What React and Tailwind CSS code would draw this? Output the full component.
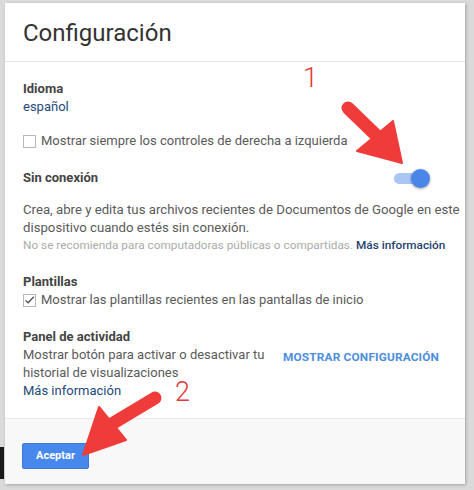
import React from 'react'

const font = { fontFamily: 'Roboto, "Open Sans", Arial, sans-serif' }

function Toggle() {
  return (
    <div className="relative w-[36px] h-[20px] mr-[23px] flex items-center">
      <div className="w-[30px] h-[11px] rounded-full bg-[#a9c6f5]" />
      <div className="absolute right-0 top-[1px] w-[19px] h-[19px] rounded-full bg-[#4a86e8] shadow-[0_1px_3px_rgba(0,0,0,0.35)]" />
    </div>
  )
}

function Checkbox({ checked }) {
  return (
    <span className="w-[13px] h-[13px] border border-[#b8b8b8] bg-white flex items-center justify-center shrink-0">
      {checked && (
        <svg viewBox="0 0 14 14" className="w-[14px] h-[14px] -mt-[1px]">
          <path d="M2 7.5 L5.3 10.6 L12.5 2.8" fill="none" stroke="#555" strokeWidth="1.8" />
        </svg>
      )}
    </span>
  )
}

function Annotations() {
  return (
    <svg className="absolute inset-0 pointer-events-none" width="474" height="490" viewBox="0 0 474 490">
      <g fill="#f03b3b" stroke="#f03b3b">
        <line x1="348" y1="108" x2="380" y2="139" strokeWidth="13" strokeLinecap="round" />
        <polygon points="357,151 393,121 402,163" strokeWidth="2" strokeLinejoin="round" />
        <line x1="155" y1="398" x2="110" y2="425" strokeWidth="13" strokeLinecap="round" />
        <polygon points="99,407 126,440 83,455" strokeWidth="2" strokeLinejoin="round" />
      </g>
      <text x="303" y="87" fontFamily="Roboto, sans-serif" fontWeight="300" fontSize="27" fill="#e23a3a">1</text>
      <text x="175" y="401" fontFamily="Roboto, sans-serif" fontWeight="300" fontSize="27" fill="#e23a3a">2</text>
    </svg>
  )
}

export default function App() {
  return (
    <div className="relative w-[474px] h-[490px] bg-[#dadada] flex overflow-hidden" style={font}>
      {/* left gutter */}
      <div className="w-[5px] flex flex-col">
        <div className="h-[447px]" />
        <div className="h-[32px] w-[4px] bg-[#1a1a1a]" />
      </div>

      <div className="mt-[3px] w-[460px] h-[481px] bg-white flex flex-col shadow-[1px_1px_3px_rgba(0,0,0,0.25)]">
        {/* header */}
        <div className="h-[59px] border-b border-[#e4e4e4] px-[18px] flex items-center">
          <h1 className="text-[24px] text-[#333] leading-none pt-[2px]">Configuración</h1>
        </div>

        {/* body */}
        <div className="flex-1 pl-[18px] pr-[12px] pt-[18px] text-[13px] text-[#5a5a5a]">
          <div className="font-bold text-[#444] leading-[18px]">Idioma</div>
          <div className="leading-[18px] text-[#22497a]">español</div>

          <label className="mt-[16px] flex items-center gap-[5px] leading-[18px]">
            <Checkbox />
            <span>Mostrar siempre los controles de derecha a izquierda</span>
          </label>

          <div className="mt-[19px] flex items-center justify-between h-[18px]">
            <span className="font-bold text-[#444]">Sin conexión</span>
            <Toggle />
          </div>

          <p className="mt-[14px] leading-[18px] whitespace-nowrap text-[13.2px]">
            Crea, abre y edita tus archivos recientes de Documentos de Google en este
            <br />
            dispositivo cuando estés sin conexión.
          </p>
          <p className="leading-[16px] text-[11.8px] text-[#ababab] whitespace-nowrap">
            No se recomienda para computadoras públicas o compartidas.{' '}
            <span className="text-[#1f3f70] font-medium">Más información</span>
          </p>

          <div className="mt-[20px] font-bold text-[#444] leading-[18px]">Plantillas</div>
          <label className="flex items-center gap-[5px] leading-[18px]">
            <Checkbox checked />
            <span>Mostrar las plantillas recientes en las pantallas de inicio</span>
          </label>

          <div className="mt-[19px] font-bold text-[#444] leading-[18px]">Panel de actividad</div>
          <div className="flex">
            <div className="w-[260px] leading-[18px]">
              <div>Mostrar botón para activar o desactivar tu historial de visualizaciones</div>
              <div className="text-[#22497a]">Más información</div>
            </div>
            <button className="h-[18px] pt-[2px] text-[11.8px] font-bold text-[#4d8ede] tracking-[0.2px] leading-[18px]">
              MOSTRAR CONFIGURACIÓN
            </button>
          </div>
        </div>

        {/* footer */}
        <div className="h-[66px] border-t border-[#e8e8e8] bg-[#f8f8f8] px-[17px] pt-[23px]">
          <button className="w-[67px] h-[26px] rounded-[2px] bg-[#4688ec] border border-[#3b78d8] text-white text-[11px] font-bold">
            Aceptar
          </button>
        </div>
      </div>

      <Annotations />
    </div>
  )
}
